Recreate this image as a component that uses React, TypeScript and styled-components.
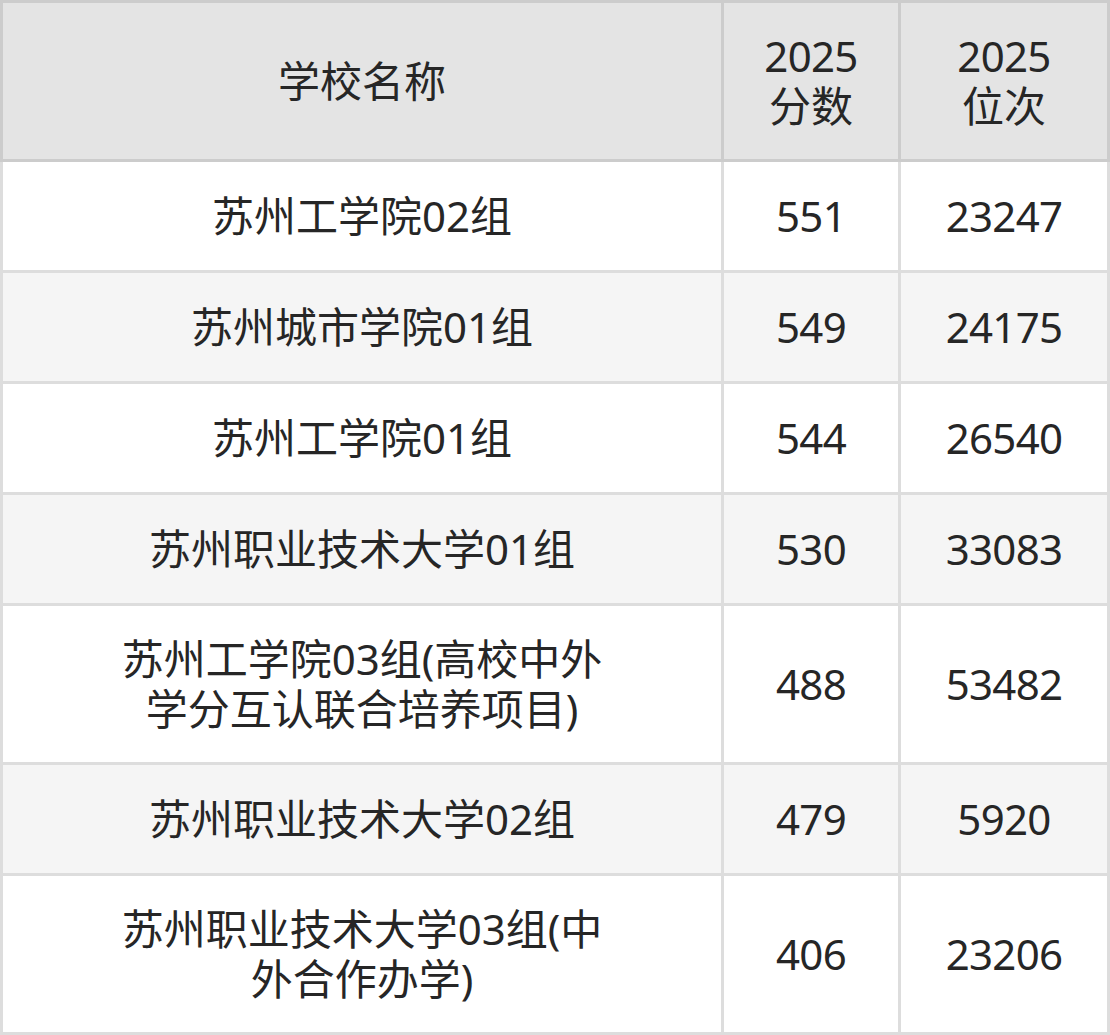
import React from 'react';
import styled, { createGlobalStyle } from 'styled-components';

const GlobalStyle = createGlobalStyle`
    html, body {
        margin: 0;
        padding: 0;
        background: #ffffff;
    }
    body {
        font-family: 'Noto Sans', 'Noto Sans CJK SC', sans-serif;
    }
`;

type Row = {
    name: string;
    score: string;
    rank: string;
};

const rows: Row[] = [
    { name: '苏州工学院02组', score: '551', rank: '23247' },
    { name: '苏州城市学院01组', score: '549', rank: '24175' },
    { name: '苏州工学院01组', score: '544', rank: '26540' },
    { name: '苏州职业技术大学01组', score: '530', rank: '33083' },
    { name: '苏州工学院03组(高校中外学分互认联合培养项目)', score: '488', rank: '53482' },
    { name: '苏州职业技术大学02组', score: '479', rank: '5920' },
    { name: '苏州职业技术大学03组(中外合作办学)', score: '406', rank: '23206' },
];

function App() {
    return (
        <>
            <GlobalStyle />
            <Table>
                <HeadCell $first>学校名称</HeadCell>
                <HeadCell>
                    <Num>2025</Num>
                    <br />
                    分数
                </HeadCell>
                <HeadCell>
                    <Num>2025</Num>
                    <br />
                    位次
                </HeadCell>
                {rows.map((row, i) => (
                    <React.Fragment key={row.name}>
                        <Cell $first $striped={i % 2 === 1}>
                            <NameText>{row.name}</NameText>
                        </Cell>
                        <Cell $striped={i % 2 === 1}>
                            <Num>{row.score}</Num>
                        </Cell>
                        <Cell $striped={i % 2 === 1}>
                            <Num>{row.rank}</Num>
                        </Cell>
                    </React.Fragment>
                ))}
            </Table>
        </>
    );
}

export default App;

const Table = styled.div`
    display: grid;
    grid-template-columns: 724px 177px 209px;
    width: 1110px;
    color: #262626;
    font-size: 42px;
    line-height: 50px;
`;

const BaseCell = styled.div<{ $first?: boolean }>`
    box-sizing: border-box;
    display: flex;
    flex-direction: column;
    align-items: center;
    justify-content: center;
    text-align: center;
    padding: 28px 0;
    border-right: 3px solid;
    border-bottom: 3px solid;
    border-left: ${({ $first }) => ($first ? '3px solid' : 'none')};
    br {
        display: none;
    }
`;

const HeadCell = styled(BaseCell)`
    background: #e4e4e4;
    border-color: #cccccc;
    border-top: 3px solid #cccccc;
    min-height: 162px;
`;

const Cell = styled(BaseCell)<{ $striped?: boolean }>`
    background: ${({ $striped }) => ($striped ? '#f5f5f5' : '#ffffff')};
    border-color: #dddddd;
    min-height: 111px;
`;

const Num = styled.span`
    letter-spacing: -0.7px;
`;

const NameText = styled.div`
    max-width: 500px;
`;
